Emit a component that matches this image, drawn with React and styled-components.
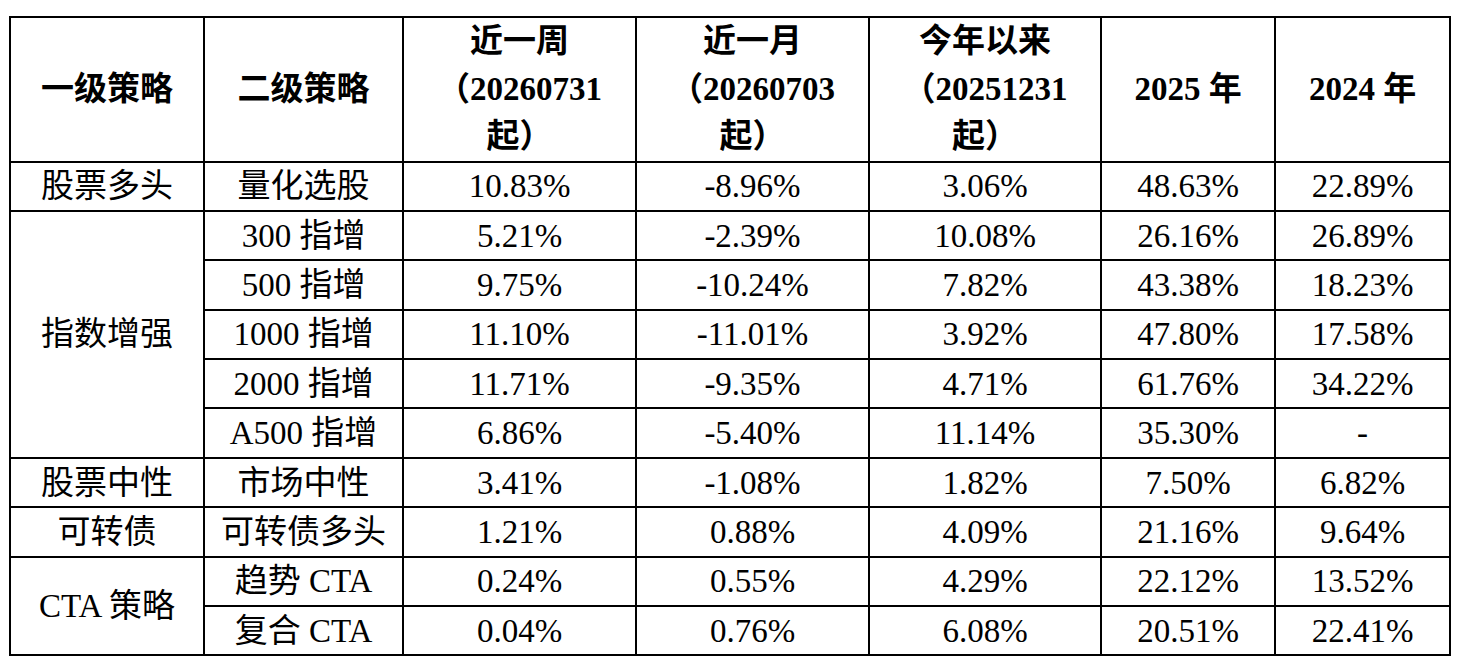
import React from "react";
import styled, { createGlobalStyle } from "styled-components";

const Global = createGlobalStyle`
  html, body { margin: 0; padding: 0; background: #fff; }
  body { font-family: "Liberation Serif", "Noto Sans CJK SC", serif; color: #000; }
`;

const Page = styled.div`
  padding: 16px 0 0 9px;
`;

const Table = styled.table`
  border-collapse: collapse;
  table-layout: fixed;
  width: 1442px;
  font-size: 33px;
  border: 2px solid #000;
`;

const HeadCell = styled.th`
  border: 2px solid #000;
  font-weight: bold;
  line-height: 47.5px;
  height: 142.5px;
  padding: 0;
  text-align: center;
  vertical-align: middle;
`;

const Cell = styled.td`
  border: 2px solid #000;
  font-weight: normal;
  line-height: 36px;
  height: 47.4px;
  padding: 0;
  text-align: center;
  vertical-align: middle;
  white-space: nowrap;
`;

const widths = [194, 199, 233, 233, 232, 174, 175];

const groups = [
  { name: "股票多头", rows: [["量化选股", "10.83%", "-8.96%", "3.06%", "48.63%", "22.89%"]] },
  {
    name: "指数增强",
    rows: [
      ["300 指增", "5.21%", "-2.39%", "10.08%", "26.16%", "26.89%"],
      ["500 指增", "9.75%", "-10.24%", "7.82%", "43.38%", "18.23%"],
      ["1000 指增", "11.10%", "-11.01%", "3.92%", "47.80%", "17.58%"],
      ["2000 指增", "11.71%", "-9.35%", "4.71%", "61.76%", "34.22%"],
      ["A500 指增", "6.86%", "-5.40%", "11.14%", "35.30%", "-"],
    ],
  },
  { name: "股票中性", rows: [["市场中性", "3.41%", "-1.08%", "1.82%", "7.50%", "6.82%"]] },
  { name: "可转债", rows: [["可转债多头", "1.21%", "0.88%", "4.09%", "21.16%", "9.64%"]] },
  {
    name: "CTA 策略",
    rows: [
      ["趋势 CTA", "0.24%", "0.55%", "4.29%", "22.12%", "13.52%"],
      ["复合 CTA", "0.04%", "0.76%", "6.08%", "20.51%", "22.41%"],
    ],
  },
];

export default function App() {
  return (
    <>
      <Global />
      <Page>
        <Table>
          <colgroup>
            {widths.map((w, i) => (
              <col key={i} style={{ width: w }} />
            ))}
          </colgroup>
          <thead>
            <tr>
              <HeadCell>一级策略</HeadCell>
              <HeadCell>二级策略</HeadCell>
              <HeadCell>
                近一周
                <br />
                （20260731
                <br />
                起）
              </HeadCell>
              <HeadCell>
                近一月
                <br />
                （20260703
                <br />
                起）
              </HeadCell>
              <HeadCell>
                今年以来
                <br />
                （20251231
                <br />
                起）
              </HeadCell>
              <HeadCell>2025 年</HeadCell>
              <HeadCell>2024 年</HeadCell>
            </tr>
          </thead>
          <tbody>
            {groups.map((g) =>
              g.rows.map((r, i) => (
                <tr key={g.name + i}>
                  {i === 0 && <Cell rowSpan={g.rows.length}>{g.name}</Cell>}
                  {r.map((v, j) => (
                    <Cell key={j}>{v}</Cell>
                  ))}
                </tr>
              ))
            )}
          </tbody>
        </Table>
      </Page>
    </>
  );
}
